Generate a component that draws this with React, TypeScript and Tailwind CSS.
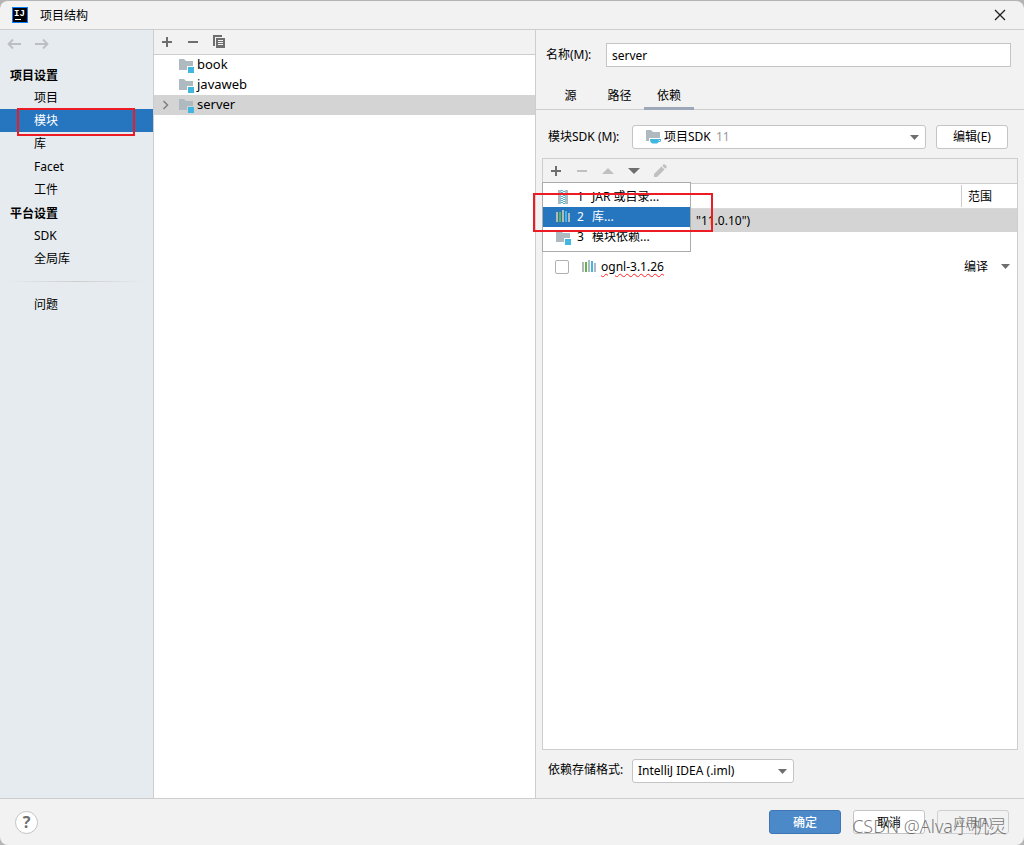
import type { ReactNode } from 'react';
import clsx from 'clsx';

const FolderIcon = ({ badge = 'module' }: { badge?: 'module' | 'sdk' }) => (
  <svg width="16" height="16" viewBox="0 0 16 16" className="shrink-0" aria-hidden="true">
    {badge === 'module' ? (
      <>
        <path d="M1 2h5l2 2h7v5H9v4H1z" fill="#aeb9c0" />
        <path d="M10 10h6v6h-6z" fill="#40b6e0" />
      </>
    ) : (
      <>
        <path d="M1 1h5l2 2h7v6H4v3H1z" fill="#aeb9c0" />
        <path
          d="M5 10h11v1.500c0 1-1 1.500-2.500 1.500-.5 1-1.500 1.500-2.500 1.500H8C6 14.500 5 12.500 5 10zM13.800 11v1c.8 0 1.200-.2 1.200-1z"
          fill="#40b6e0"
          fillRule="evenodd"
        />
      </>
    )}
  </svg>
);

const LibraryIcon = () => (
  <svg width="16" height="16" viewBox="0 0 16 16" className="shrink-0" aria-hidden="true">
    <path d="M1 3h2v10H1zM7 1h2v12H7zM13 4h2v9h-2z" fill="#aeb9c0" />
    <path d="M4 3h2v10H4z" fill="#62b543" />
    <path d="M10 2h2v11h-2z" fill="#40b6e0" />
  </svg>
);

const JarIcon = () => (
  <svg width="16" height="16" viewBox="0 0 16 16" className="shrink-0" aria-hidden="true">
    <path d="M3 1h3v14H3zM10 1h3v14h-3z" fill="#aeb9c0" />
    <path
      d="M6 1h2v1H6zM8 2h2v1H8zM6 3h2v1H6zM8 4h2v1H8zM6 5h2v1H6zM8 6h2v1H8zM6 7h2v1H6zM8 8h2v1H8zM6 9h2v1H6zM8 10h2v1H8zM6 11h2v1H6zM8 12h2v1H8zM6 13h2v1H6zM8 14h2v1H8z"
      fill="#40b6e0"
    />
  </svg>
);

const PlusIcon = () => (
  <svg width="16" height="16" viewBox="0 0 16 16" aria-hidden="true">
    <path d="M7 3h2v4h4v2H9v4H7V9H3V7h4z" fill="#6e6e6e" />
  </svg>
);

const MinusIcon = ({ muted }: { muted?: boolean }) => (
  <svg width="16" height="16" viewBox="0 0 16 16" aria-hidden="true">
    <path d="M3 7h10v2H3z" fill={muted ? '#c0c0c0' : '#6e6e6e'} />
  </svg>
);

const CopyIcon = () => (
  <svg width="16" height="16" viewBox="0 0 16 16" aria-hidden="true">
    <path d="M2 1h9v2H4v9H2z" fill="#6e6e6e" />
    <path d="M5 4h9v10H5zM7 6v1h5V6zM7 8v1h5V8zM7 10v1h5v-1z" fill="#6e6e6e" fillRule="evenodd" />
  </svg>
);

const ArrowIcon = ({ right }: { right?: boolean }) => (
  <svg width="16" height="16" viewBox="0 0 16 16" fill="none" stroke="#bcc0c3" strokeWidth="1.800" aria-hidden="true">
    {right ? <path d="M1 8h12M9 3.500 13.500 8 9 12.500" /> : <path d="M15 8H3M7 3.500 2.500 8 7 12.500" />}
  </svg>
);

const Caret = ({ className }: { className?: string }) => (
  <svg width="9" height="5" viewBox="0 0 9 5" className={className} aria-hidden="true">
    <path d="M0 0h9L4.500 5z" fill="#6e6e6e" />
  </svg>
);

const IconButton = ({ label, disabled, children }: { label: string; disabled?: boolean; children: ReactNode }) => (
  <button type="button" aria-label={label} disabled={disabled} className="flex size-4 items-center justify-center">
    {children}
  </button>
);

const navGroups = [
  { title: '项目设置', items: ['项目', '模块', '库', 'Facet', '工件'] },
  { title: '平台设置', items: ['SDK', '全局库'] },
];

const NavItem = ({ text, active }: { text: string; active?: boolean }) => (
  <li className="relative">
    <a
      href="#"
      className={clsx('flex h-[23px] items-center pl-[34px]', active && 'bg-[#2675bf] text-white')}
    >
      {text}
    </a>
    {active && (
      <span className="pointer-events-none absolute -top-px left-[17px] h-7 w-[118px] border-2 border-[#ed1c24]" />
    )}
  </li>
);

const Sidebar = () => (
  <nav className="border-r border-[#cdcdcd] bg-[#e6ebef]">
    <div className="mb-[5px] flex h-7 items-center gap-3 pl-[6px]">
      <IconButton label="后退" disabled>
        <ArrowIcon />
      </IconButton>
      <IconButton label="前进" disabled>
        <ArrowIcon right />
      </IconButton>
    </div>
    {navGroups.map((group) => (
      <section key={group.title}>
        <h2 className="flex h-[23px] items-center pt-[2px] pl-[10px] font-bold">{group.title}</h2>
        <ul>
          {group.items.map((item) => (
            <NavItem key={item} text={item} active={item === '模块'} />
          ))}
        </ul>
      </section>
    ))}
    <div className="mx-2 my-[11px] h-px bg-linear-to-r from-transparent via-[#cdcdcd] to-transparent" />
    <ul>
      <NavItem text="问题" />
    </ul>
  </nav>
);

const modules = ['book', 'javaweb', 'server'];

const ModuleTree = () => (
  <section className="border-r border-[#cdcdcd] bg-white">
    <div className="flex h-[25px] items-center gap-[10px] border-b border-[#cdcdcd] bg-[#f2f2f2] pl-[5px]">
      <IconButton label="添加">
        <PlusIcon />
      </IconButton>
      <IconButton label="移除">
        <MinusIcon />
      </IconButton>
      <IconButton label="复制">
        <CopyIcon />
      </IconButton>
    </div>
    <ul className="text-[13px]">
      {modules.map((name) => (
        <li
          key={name}
          className={clsx('flex h-5 items-center pl-2', name === 'server' && 'bg-[#d4d4d4]')}
        >
          <span className="flex w-4 shrink-0">
            {name === 'server' && (
              <svg width="8" height="10" viewBox="0 0 8 10" fill="none" stroke="#7f7f7f" strokeWidth="1.500" aria-hidden="true">
                <path d="M1.500 1 5.500 5l-4 4" />
              </svg>
            )}
          </span>
          <FolderIcon />
          <span className="pb-[2px] pl-[3px]">{name}</span>
        </li>
      ))}
    </ul>
  </section>
);

const tabs = [
  { text: '源', width: 'w-[43px] pr-[6px]' },
  { text: '路径', width: 'w-[49px]' },
  { text: '依赖', width: 'w-[50px]' },
];

const addMenu = [
  { icon: <JarIcon />, text: 'JAR 或目录...' },
  { icon: <LibraryIcon />, text: '库...' },
  { icon: <FolderIcon />, text: '模块依赖...' },
];

const DependencyToolbar = () => (
  <div className="relative flex h-[25px] shrink-0 items-center gap-[10px] border-b border-[#cdcdcd] bg-[#f2f2f2] pl-[5px]">
    <IconButton label="添加">
      <PlusIcon />
    </IconButton>
    <IconButton label="移除" disabled>
      <MinusIcon muted />
    </IconButton>
    <IconButton label="上移" disabled>
      <svg width="12" height="6" viewBox="0 0 12 6" aria-hidden="true">
        <path d="M0 6h12L6 0z" fill="#c0c0c0" />
      </svg>
    </IconButton>
    <IconButton label="下移">
      <svg width="12" height="6" viewBox="0 0 12 6" aria-hidden="true">
        <path d="M0 0h12L6 6z" fill="#6e6e6e" />
      </svg>
    </IconButton>
    <IconButton label="编辑" disabled>
      <svg width="16" height="16" viewBox="0 0 16 16" aria-hidden="true">
        <path d="M2 14v-3l7.500-7.500 3 3L5 14zM10.300 2.700l1.200-1.200c.4-.4 1-.4 1.400 0l1.600 1.600c.4.4.4 1 0 1.400l-1.200 1.200z" fill="#c0c0c0" />
      </svg>
    </IconButton>

    <ul
      role="menu"
      className="absolute top-[23px] -left-px z-10 w-[149px] border border-[#ababab] bg-white py-1"
    >
      {addMenu.map((item, i) => (
        <li key={item.text} role="none">
          <button
            type="button"
            role="menuitem"
            className={clsx('flex h-5 w-full items-center pl-3', i === 1 && 'bg-[#2675bf] text-white')}
          >
            {item.icon}
            <span className="w-[21px] pl-[6px] text-left">{i + 1}</span>
            <span>{item.text}</span>
          </button>
        </li>
      ))}
    </ul>
    <span className="pointer-events-none absolute top-[34px] -left-[10px] z-20 h-[39px] w-[180px] border-2 border-[#ed1c24]" />
  </div>
);

const DependencyTable = () => (
  <table className="w-full table-fixed border-separate border-spacing-0">
    <thead>
      <tr className="h-[25px]">
        <th className="border-b border-[#d9d9d9]" />
        <th className="w-14 border-b border-[#d9d9d9] p-0 text-left font-normal">
          <div className="flex h-[22px] items-center border-l border-[#cdcdcd] pt-px pl-[6px]">范围</div>
        </th>
      </tr>
    </thead>
    <tbody>
      <tr className="h-[23px] bg-[#d4d4d4]">
        <td className="p-0 pl-[153px]">"11.0.10")</td>
        <td />
      </tr>
      <tr className="h-[23px]">
        <td />
        <td />
      </tr>
      <tr className="h-[23px]">
        <td className="p-0">
          <label className="flex items-center pl-3">
            <input
              type="checkbox"
              className="size-[14px] appearance-none rounded-xs border border-[#b0b0b0] bg-white"
            />
            <span className="flex items-center gap-1 pl-3">
              <LibraryIcon />
              <span className="underline decoration-[#ff2020] decoration-wavy decoration-1 underline-offset-2">
                ognl-3.1.26
              </span>
            </span>
          </label>
        </td>
        <td className="p-0">
          <div className="relative flex items-center">
            <select aria-label="范围" className="w-full appearance-none bg-transparent pl-[3px]">
              <option>编译</option>
            </select>
            <Caret className="pointer-events-none absolute right-[7px]" />
          </div>
        </td>
      </tr>
    </tbody>
  </table>
);

const ModuleEditor = () => (
  <section className="flex min-w-0 flex-col">
    <div className="mt-[13px] flex h-6 items-center pr-[13px] pl-[10px]">
      <label htmlFor="module-name" className="w-[60px] shrink-0">
        名称(M):
      </label>
      <input
        id="module-name"
        defaultValue="server"
        className="h-full min-w-0 flex-1 border border-[#c4c4c4] bg-white px-[5px]"
      />
    </div>

    <div role="tablist" className="mt-[15px] flex h-7 border-b border-[#cdcdcd] pl-4">
      {tabs.map((tab) => (
        <button
          key={tab.text}
          type="button"
          role="tab"
          aria-selected={tab.text === '依赖'}
          className={clsx(
            'h-7 border-b-3 pt-[2px]',
            tab.width,
            tab.text === '依赖' ? 'border-[#9ca7b8]' : 'border-transparent',
          )}
        >
          {tab.text}
        </button>
      ))}
    </div>

    <div className="mt-[15px] flex h-6 items-center pr-4 pl-3">
      <label htmlFor="module-sdk" className="w-[84px] shrink-0">
        模块SDK (M):
      </label>
      <div className="relative flex h-full min-w-0 flex-1 items-center">
        <select
          id="module-sdk"
          className="h-full w-full appearance-none rounded-[3px] border border-[#c4c4c4] bg-white pl-[31px]"
        >
          <option>项目SDK</option>
        </select>
        <span className="pointer-events-none absolute inset-x-0 flex items-center pr-[7px] pl-[13px]">
          <FolderIcon badge="sdk" />
          <span className="pl-[55px] text-[#999999]">11</span>
          <Caret className="ml-auto" />
        </span>
      </div>
      <button type="button" className="ml-[10px] h-full w-[72px] rounded-[3px] border border-[#c4c4c4] bg-white">
        编辑(E)
      </button>
    </div>

    <div className="mx-[6px] mt-[9px] flex flex-1 flex-col border border-[#cdcdcd] bg-white">
      <DependencyToolbar />
      <DependencyTable />
    </div>

    <div className="mt-[9px] mb-[15px] flex h-6 items-center pl-3">
      <label htmlFor="storage-format" className="w-[84px] shrink-0 pb-[2px]">
        依赖存储格式:
      </label>
      <div className="relative flex h-full w-[162px] items-center">
        <select
          id="storage-format"
          className="h-full w-full appearance-none rounded-[3px] border border-[#c4c4c4] bg-white pl-[5px]"
        >
          <option>IntelliJ IDEA (.iml)</option>
        </select>
        <Caret className="pointer-events-none absolute right-[7px]" />
      </div>
    </div>
  </section>
);

const Footer = () => (
  <footer className="relative flex h-[47px] shrink-0 items-center border-t border-[#cdcdcd] px-[15px]">
    <button
      type="button"
      aria-label="帮助"
      className="size-[23px] rounded-full border border-[#c4c4c4] bg-white text-base leading-5 font-bold text-[#6e6e6e]"
    >
      ?
    </button>
    <div className="ml-auto flex gap-3">
      <button type="button" className="h-6 w-[72px] rounded-[3px] border border-[#3f74b5] bg-[#4c89c9] pt-px font-medium text-white">
        确定
      </button>
      <button type="button" className="h-6 w-[72px] rounded-[3px] border border-[#c4c4c4] bg-white pt-px">
        取消
      </button>
      <button type="button" disabled className="h-6 w-[72px] rounded-[3px] border border-[#cfcfcf] pt-px text-[#8c8c8c]">
        应用(A)
      </button>
    </div>
    <span className="pointer-events-none absolute right-[17px] bottom-[7px] text-lg leading-6 font-light whitespace-nowrap text-[#505050]/75">
      CSDN @Alva小机灵
    </span>
  </footer>
);

export default function App() {
  return (
    <div className="min-h-screen bg-[#b4b4b4] font-['Noto_Sans','Noto_Sans_CJK_SC',sans-serif] text-xs leading-4 text-black">
      <div className="flex min-h-screen flex-col overflow-hidden rounded-lg border-t border-[#b4b4b4] bg-[#f2f2f2]">
        <header className="flex h-[29px] shrink-0 items-center border-b border-[#cdcdcd] pr-[18px] pl-3">
          <svg width="16" height="16" viewBox="0 0 16 16" aria-hidden="true">
            <path d="M0 0h16v16H0z" fill="#087cfa" />
            <path d="M1 1h14v14H1z" fill="#000" />
            <text x="2" y="9" fill="#fff" fontSize="9" fontWeight="700" fontFamily="Liberation Mono, monospace">
              IJ
            </text>
            <path d="M3 12h6v1H3z" fill="#fff" />
          </svg>
          <h1 className="pt-px pl-3">项目结构</h1>
          <button type="button" aria-label="关闭" className="ml-auto">
            <svg width="12" height="12" viewBox="0 0 12 12" stroke="#1a1a1a" strokeWidth="1.200" aria-hidden="true">
              <path d="m1 1 10 10M11 1 1 11" />
            </svg>
          </button>
        </header>
        <main className="grid flex-1 grid-cols-[154px_382fr_488fr]">
          <Sidebar />
          <ModuleTree />
          <ModuleEditor />
        </main>
        <Footer />
      </div>
    </div>
  );
}
